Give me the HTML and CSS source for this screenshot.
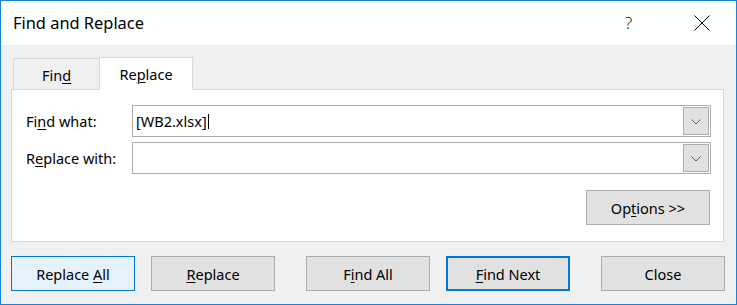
FILE: index.html
```html
<!DOCTYPE html>
<html lang="en">
<head>
	<meta charset="utf-8">
	<title>Find and Replace</title>
	<link rel="stylesheet" href="styles.css">
</head>
<body>
<div class="dialog">
	<div class="titlebar">
		<span class="title">Find and Replace</span>
		<span class="help">?</span>
		<span class="close-x">
			<svg width="16" height="16" viewBox="0 0 16 16"><path d="M0.5 0.5 L15.5 15.5 M15.5 0.5 L0.5 15.5" stroke="#000" stroke-width="1" fill="none"/></svg>
		</span>
	</div>

	<div class="client">
		<div class="tabs">
			<div class="tab">Fin<u>d</u></div>
			<div class="tab active">Re<u>p</u>lace</div>
		</div>

		<div class="panel">
			<div class="row">
				<label>Fi<u>n</u>d what:</label>
				<div class="combo">
					<span class="value">[WB2.xlsx]<span class="caret"></span></span>
					<span class="drop"><svg width="10" height="6" viewBox="0 0 10 6"><path d="M0.5 0.5 L5 5 L9.5 0.5" stroke="#606060" stroke-width="1" fill="none"/></svg></span>
				</div>
			</div>
			<div class="row">
				<label>R<u>e</u>place with:</label>
				<div class="combo">
					<span class="value"></span>
					<span class="drop"><svg width="10" height="6" viewBox="0 0 10 6"><path d="M0.5 0.5 L5 5 L9.5 0.5" stroke="#606060" stroke-width="1" fill="none"/></svg></span>
				</div>
			</div>
			<div class="options-row">
				<button class="btn">Op<u>t</u>ions &gt;&gt;</button>
			</div>
		</div>

		<div class="actions">
			<button class="btn hot">Replace <u>A</u>ll</button>
			<button class="btn"><u>R</u>eplace</button>
			<button class="btn group">F<u>i</u>nd All</button>
			<button class="btn default"><u>F</u>ind Next</button>
			<button class="btn group">Close</button>
		</div>
	</div>
</div>
</body>
</html>
```

FILE: styles.css
```css
html, body {
	margin: 0;
	padding: 0;
	background: #f0f0f0;
}

body {
	font-family: "Noto Sans", "Open Sans", sans-serif;
	font-size: 14.5px;
	color: #000;
}

u { text-underline-offset: 2px; text-decoration-thickness: 1px; }

.dialog {
	width: 737px;
	height: 305px;
	box-sizing: border-box;
	border: 1px solid #1883d7;
	background: #f0f0f0;
	display: flex;
	flex-direction: column;
}

/* title bar */
.titlebar {
	height: 44px;
	background: #fff;
	display: flex;
	align-items: center;
	padding-left: 12px;
}
.title {
	font-size: 16.4px;
	flex: 1;
	margin-top: -1px;
}
.help {
	font-size: 17px;
	font-weight: 300;
	color: #222;
	width: 12px;
	margin-right: 57px;
	margin-top: -1px;
}
.close-x {
	display: flex;
	width: 16px;
	height: 16px;
	margin-right: 26px;
	margin-top: -1px;
}

/* client area */
.client {
	flex: 1;
	padding: 11px 0 0 10px;
}

.tabs {
	display: flex;
	align-items: flex-end;
	margin-left: 2px;
	height: 33px;
}
.tab {
	box-sizing: border-box;
	height: 31px;
	width: 86px;
	border: 1px solid #d9d9d9;
	border-right: none;
	border-bottom: none;
	text-align: center;
	line-height: 28px;
	padding-top: 2px;
}
.tab.active {
	height: 33px;
	width: 94px;
	background: #fff;
	border-right: 1px solid #d9d9d9;
	position: relative;
	top: 1px;
	z-index: 1;
	line-height: 30px;
	padding-top: 1px;
}

.panel {
	box-sizing: border-box;
	width: 713px;
	height: 153px;
	background: #fff;
	border: 1px solid #d9d9d9;
	padding: 15px 12px 15px 14px;
}

.row {
	display: flex;
	align-items: center;
	margin-bottom: 5px;
}
.row label {
	width: 106px;
}
.combo {
	box-sizing: border-box;
	flex: 1;
	height: 32px;
	border: 1px solid #adadad;
	display: flex;
	align-items: center;
	padding: 1px;
}
.value {
	flex: 1;
	padding-left: 2px;
	display: flex;
	align-items: center;
}
.caret {
	display: inline-block;
	width: 1px;
	height: 15px;
	background: #000;
	margin-left: 1px;
}
.drop {
	box-sizing: border-box;
	width: 26px;
	height: 28px;
	background: #e1e1e1;
	border: 1px solid #adadad;
	display: flex;
	align-items: center;
	justify-content: center;
	padding-top: 1px;
}

.options-row {
	display: flex;
	justify-content: flex-end;
	margin-top: 16px;
	padding-right: 1px;
}

/* buttons */
.btn {
	box-sizing: border-box;
	width: 124px;
	height: 35px;
	background: #e1e1e1;
	border: 1px solid #adadad;
	font: inherit;
	color: #000;
	padding: 0;
	margin: 0;
}
.btn.hot {
	background: #e5f1fb;
	border-color: #0078d7;
}
.btn.default {
	border: 2px solid #0078d7;
}

.actions {
	display: flex;
	gap: 16px;
	margin-top: 14px;
}
.actions .group {
	margin-left: 15px;
}
```
